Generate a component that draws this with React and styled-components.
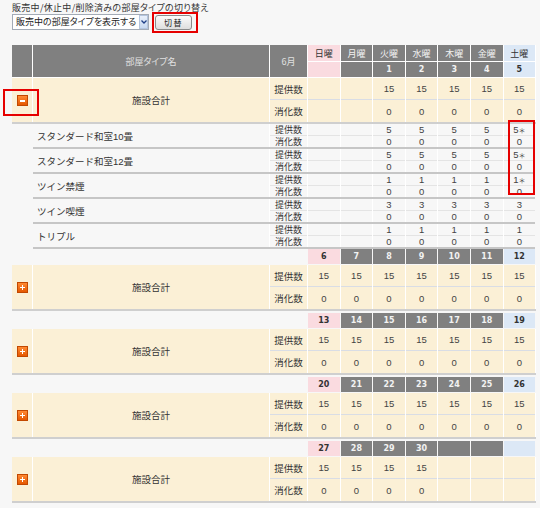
import React from "react";
import styled, { createGlobalStyle, css } from "styled-components";

const GlobalStyle = createGlobalStyle`
  html, body { margin: 0; padding: 0; background: #f7f7f7; }
  body {
    font-family: "Liberation Sans", "Noto Sans CJK JP", sans-serif;
    color: #333;
  }
`;

const COLS = "20px 236px 37px repeat(7, 31.6px)";
const DETAIL_COLS = "236px 37px repeat(7, 31.6px)";

const CREAM = "#fbf0d6";
const GRAY = "#808080";
const PINK = "#fadbe0";
const BLUE = "#dce8f6";

const toneBg = { sun: PINK, wk: GRAY, sat: BLUE };
const toneFg = { sun: "#333", wk: "#f2f2f2", sat: "#333" };

const Page = styled.div`
  width: 540px;
  height: 508px;
  overflow: hidden;
  box-sizing: border-box;
  padding: 2px 0 0 12px;
`;

const Caption = styled.div`
  font-family: "Noto Sans CJK JP", sans-serif;
  font-size: 9px;
  line-height: 11px;
  color: #333;
  font-feature-settings: "palt";
  letter-spacing: 0.3px;
`;

const Controls = styled.div`
  position: relative;
  display: flex;
  align-items: center;
  gap: 6px;
  margin-top: 1px;
  height: 16px;
`;

const SelectBox = styled.div`
  width: 137px;
  height: 16px;
  box-sizing: border-box;
  border: 1px solid #a3abb6;
  background: #fff;
  display: flex;
  align-items: center;
  justify-content: space-between;
  padding: 0 0 0 3px;
`;

const SelectText = styled.span`
  font-family: "Noto Sans CJK JP", sans-serif;
  font-size: 9px;
  line-height: 14px;
  color: #222;
  font-feature-settings: "palt";
`;

const SelectArrow = styled.span`
  width: 9px;
  height: 14px;
  box-sizing: border-box;
  background: linear-gradient(#e9f0fa, #c8d9f0);
  border: 1px solid #b3c4dd;
  display: flex;
  align-items: center;
  justify-content: center;
`;

const SwitchButton = styled.button`
  width: 37px;
  height: 15px;
  padding: 0;
  box-sizing: border-box;
  border: 1px solid #8a8a8a;
  border-radius: 3px;
  background: linear-gradient(#fbfbfb, #dedede);
  font-family: "Noto Sans CJK JP", sans-serif;
  font-size: 8px;
  letter-spacing: 1.5px;
  color: #222;
  line-height: 13px;
`;

const Frame = styled.div`
  position: absolute;
  box-sizing: border-box;
  border: 2px solid #e60000;
  pointer-events: none;
`;

const Calendar = styled.div`
  position: relative;
  margin-top: 15px;
  width: 524px;
  display: flex;
  flex-direction: column;
`;

const HeaderGrid = styled.div`
  display: grid;
  grid-template-columns: ${COLS};
  grid-template-rows: 16px 15px;
  column-gap: 1px;
  row-gap: 1px;
  background: #fff;
  border-bottom: 1px solid #fff;
`;

const HeadCell = styled.div`
  grid-row: span 2;
  background: ${GRAY};
  color: #e0e0e0;
  display: flex;
  align-items: center;
  justify-content: center;
  font-family: "Noto Sans CJK JP", sans-serif;
  font-size: 9px;
  font-feature-settings: "palt";
`;

const DayNameCell = styled.div`
  background: ${(p) => toneBg[p.$tone]};
  color: ${(p) => toneFg[p.$tone]};
  display: flex;
  align-items: center;
  justify-content: center;
  font-family: "Noto Sans CJK JP", sans-serif;
  font-size: 9px;
`;

const DayNumCell = styled.div`
  background: ${(p) => toneBg[p.$tone]};
  color: ${(p) => toneFg[p.$tone]};
  display: flex;
  align-items: center;
  justify-content: center;
  font-family: "DejaVu Sans", sans-serif;
  font-weight: bold;
  font-size: 8px;
`;

const WeekHeader = styled.div`
  display: grid;
  grid-template-columns: ${COLS};
  grid-template-rows: 15px;
  column-gap: 1px;
  margin-bottom: 1px;
`;

const WeekBlank = styled.div`
  grid-column: span 3;
`;

const TotalGrid = styled.div`
  display: grid;
  grid-template-columns: ${COLS};
  grid-template-rows: 22px 22px;
  column-gap: 1px;
  background: #fff;
  border-bottom: 2px solid #cfcfcf;
  margin-bottom: ${(p) => (p.$gapAfter ? "2px" : "0")};
`;

const TotalSpanCell = styled.div`
  grid-row: span 2;
  background: ${CREAM};
  display: flex;
  align-items: center;
  justify-content: center;
  font-family: "Noto Sans CJK JP", sans-serif;
  font-size: 9.5px;
  color: #333;
`;

const TotalCell = styled.div`
  background: ${CREAM};
  box-sizing: border-box;
  display: flex;
  align-items: center;
  justify-content: center;
  font-size: 9.5px;
  color: #444;
  ${(p) =>
    p.$top &&
    css`
      border-bottom: 1px solid #d9dde5;
    `}
  ${(p) =>
    p.$label &&
    css`
      font-family: "Noto Sans CJK JP", sans-serif;
      color: #333;
    `}
`;

const DetailRow = styled.div`
  display: flex;
  padding-left: 21px;
`;

const DetailGrid = styled.div`
  display: grid;
  grid-template-columns: ${DETAIL_COLS};
  grid-template-rows: 12px 11px;
  column-gap: 1px;
  background: #fff;
  border-bottom: 2px solid #c6c6c6;
`;

const RoomName = styled.div`
  grid-row: span 2;
  background: #f7f7f7;
  display: flex;
  align-items: center;
  padding-left: 4px;
  font-size: 9.5px;
  color: #333;
`;

const DetailCell = styled.div`
  background: #f7f7f7;
  box-sizing: border-box;
  display: flex;
  align-items: center;
  justify-content: center;
  overflow: hidden;
  font-size: 9.5px;
  color: #444;
  line-height: 10px;
  ${(p) =>
    p.$top &&
    css`
      border-bottom: 1px solid #e4e4e4;
    `}
  ${(p) =>
    p.$label &&
    css`
      font-family: "Noto Sans CJK JP", sans-serif;
      font-size: 9px;
      color: #333;
    `}
`;

const Mark = styled.span`
  font-family: "Noto Sans CJK JP", sans-serif;
  font-size: 7px;
  line-height: 10px;
`;

function ToggleIcon({ open }) {
  const id = open ? "gm" : "gp";
  return (
    <svg width="11" height="11" viewBox="0 0 11 11" shapeRendering="crispEdges">
      <defs>
        <linearGradient id={id} x1="0" y1="0" x2="0" y2="1">
          <stop offset="0" stopColor="#ff8a33" />
          <stop offset="1" stopColor="#e55800" />
        </linearGradient>
      </defs>
      <rect x="0" y="0" width="11" height="11" fill="#c24800" />
      <rect x="1" y="1" width="9" height="9" fill={`url(#${id})`} />
      {open ? (
        <rect x="3" y="5" width="5" height="2" fill="#fff" />
      ) : (
        <>
          <rect x="3" y="5" width="5" height="1" fill="#fff" />
          <rect x="5" y="3" width="1" height="5" fill="#fff" />
        </>
      )}
    </svg>
  );
}

const TONES = ["sun", "wk", "wk", "wk", "wk", "wk", "sat"];
const DAY_NAMES = ["日曜", "月曜", "火曜", "水曜", "木曜", "金曜", "土曜"];

const WEEKS = [
  { days: ["", "", 1, 2, 3, 4, 5], open: true },
  { days: [6, 7, 8, 9, 10, 11, 12] },
  { days: [13, 14, 15, 16, 17, 18, 19] },
  { days: [20, 21, 22, 23, 24, 25, 26] },
  { days: [27, 28, 29, 30, "", "", ""] },
];

const ROOMS = [
  { name: "スタンダード和室10畳", offer: 5, mark: true },
  { name: "スタンダード和室12畳", offer: 5, mark: true },
  { name: "ツイン禁煙", offer: 1, mark: true },
  { name: "ツイン喫煙", offer: 3 },
  { name: "トリプル", offer: 1 },
];

function TotalBlock({ week, gapAfter }) {
  const offer = week.days.map((d) => (d === "" ? "" : 15));
  const used = week.days.map((d) => (d === "" ? "" : 0));
  return (
    <TotalGrid $gapAfter={gapAfter}>
      <TotalSpanCell>
        <ToggleIcon open={week.open} />
      </TotalSpanCell>
      <TotalSpanCell>施設合計</TotalSpanCell>
      <TotalCell $top $label>提供数</TotalCell>
      {offer.map((v, i) => (
        <TotalCell key={`o${i}`} $top>{v}</TotalCell>
      ))}
      <TotalCell $label>消化数</TotalCell>
      {used.map((v, i) => (
        <TotalCell key={`u${i}`}>{v}</TotalCell>
      ))}
    </TotalGrid>
  );
}

function RoomBlock({ room }) {
  const cols = [0, 1, 2, 3, 4, 5, 6];
  return (
    <DetailRow>
      <DetailGrid>
        <RoomName>{room.name}</RoomName>
        <DetailCell $top $label>提供数</DetailCell>
        {cols.map((i) => (
          <DetailCell key={`o${i}`} $top>
            {i < 2 ? "" : room.offer}
            {i === 6 && room.mark && <Mark>＊</Mark>}
          </DetailCell>
        ))}
        <DetailCell $label>消化数</DetailCell>
        {cols.map((i) => (
          <DetailCell key={`u${i}`}>{i < 2 ? "" : 0}</DetailCell>
        ))}
      </DetailGrid>
    </DetailRow>
  );
}

export default function App() {
  return (
    <>
      <GlobalStyle />
      <Page>
        <Caption>販売中/休止中/削除済みの部屋タイプの切り替え</Caption>
        <Controls>
          <SelectBox>
            <SelectText>販売中の部屋タイプを表示する</SelectText>
            <SelectArrow>
              <svg width="6" height="4" viewBox="0 0 6 4">
                <path d="M0.5 0.5 L3 3 L5.5 0.5" fill="none" stroke="#1f3f86" strokeWidth="1.3" />
              </svg>
            </SelectArrow>
          </SelectBox>
          <SwitchButton>切替</SwitchButton>
          <Frame style={{ left: 140, top: -2, width: 46, height: 21 }} />
        </Controls>

        <Calendar>
          <HeaderGrid>
            <HeadCell />
            <HeadCell>部屋タイプ名</HeadCell>
            <HeadCell>6月</HeadCell>
            {DAY_NAMES.map((n, i) => (
              <DayNameCell key={n} $tone={TONES[i]}>{n}</DayNameCell>
            ))}
            {WEEKS[0].days.map((d, i) => (
              <DayNumCell key={`h${i}`} $tone={TONES[i]}>{d}</DayNumCell>
            ))}
          </HeaderGrid>

          <TotalBlock week={WEEKS[0]} />
          {ROOMS.map((r) => (
            <RoomBlock key={r.name} room={r} />
          ))}

          {WEEKS.slice(1).map((w, wi) => (
            <React.Fragment key={wi}>
              <WeekHeader>
                <WeekBlank />
                {w.days.map((d, i) => (
                  <DayNumCell key={i} $tone={TONES[i]}>{d}</DayNumCell>
                ))}
              </WeekHeader>
              <TotalBlock week={w} gapAfter />
            </React.Fragment>
          ))}

          <Frame style={{ left: -9, top: 44, width: 36, height: 27 }} />
          <Frame style={{ left: 496, top: 75, width: 27, height: 75 }} />
        </Calendar>
      </Page>
    </>
  );
}
